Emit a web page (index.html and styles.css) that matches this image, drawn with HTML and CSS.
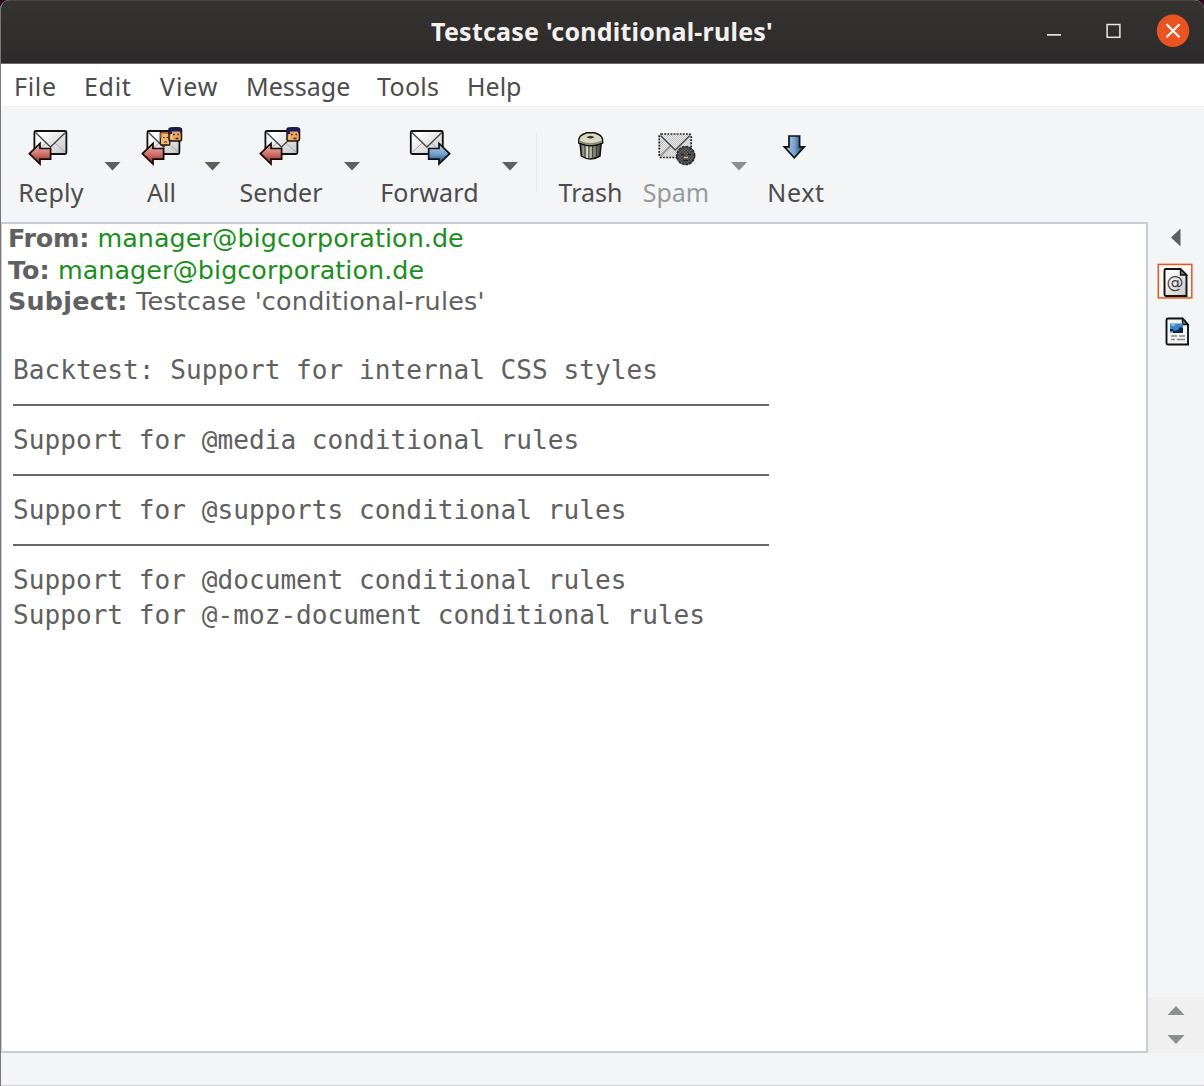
FILE: index.html
```html
<!DOCTYPE html>
<html lang="en">
<head>
<meta charset="utf-8">
<title>Testcase 'conditional-rules'</title>
<link rel="stylesheet" href="styles.css">
</head>
<body>
<svg class="defs" width="0" height="0" aria-hidden="true">
  <defs>
    <linearGradient id="paper" x1="0" y1="0" x2="1" y2="1"><stop offset="0.2" stop-color="#fcfcfc"/><stop offset="1" stop-color="#c4c4c4"/></linearGradient>
    <linearGradient id="red" x1="0" y1="0" x2="0" y2="1"><stop offset="0.2" stop-color="#e5a09a"/><stop offset="0.55" stop-color="#cb6b65"/><stop offset="0.9" stop-color="#8e3329"/></linearGradient>
    <linearGradient id="blue" x1="0" y1="0" x2="0" y2="1"><stop offset="0.2" stop-color="#a3c0dd"/><stop offset="0.55" stop-color="#6e9bc7"/><stop offset="0.8" stop-color="#346092"/></linearGradient>
    <linearGradient id="blue-down" x1="0" y1="0" x2="1" y2="0"><stop offset="0.2" stop-color="#9fbcd8"/><stop offset="0.5" stop-color="#7ca5cc"/><stop offset="0.8" stop-color="#365f8d"/></linearGradient>
    <linearGradient id="can" x1="0" y1="0" x2="1" y2="0"><stop offset="0" stop-color="#55554b"/><stop offset="0.35" stop-color="#dedece"/><stop offset="0.65" stop-color="#8e8e80"/><stop offset="1" stop-color="#35352e"/></linearGradient>
    <pattern id="dither" width="2" height="2" patternUnits="userSpaceOnUse"><rect width="2" height="2" fill="#e9e9e9"/><path d="M0 0h1v1H0zM1 1h1v1H1z" fill="#c3c3c3"/></pattern>
    <pattern id="dither-dark" width="3" height="3" patternUnits="userSpaceOnUse"><rect width="3" height="3" fill="#3b3b3b"/><path d="M0 0h1.3v1.3H0zM1.5 1.5h1.3v1.3H1.5z" fill="#777"/></pattern>
    <g id="envelope">
      <rect x="34.4" y="131" width="32" height="23" rx="1.5" fill="url(#paper)" stroke="#111" stroke-width="1.8"/>
      <path d="M36 152l10-9M65 152l-10-9" stroke="#aaa" fill="none"/>
      <path d="M35.5 132.500l15 14.500 15-14.500" stroke="#444" stroke-width="1.3" fill="none"/>
    </g>
    <path id="arrow-left" d="M29.400 153.700L40 143.500v5h10.600v10.600H40v5z" fill="url(#red)" stroke="#160807" stroke-width="1.7"/>
    <g id="face">
      <rect x="56" y="128" width="12.500" height="13" rx="2" fill="#e9a664" stroke="#17100c" stroke-width="1.5"/>
      <path d="M56 134v-5q6-3.500 12.500-.5v6l-2-3h-7.500v3z" fill="#1d1d57"/>
      <path d="M60 134.500h1.600M64.500 134.500h1.500M62.500 138.500h3" stroke="#4b2413" stroke-width="1.300"/>
      <path d="M58.500 134v5" stroke="#ffd09a"/>
    </g>
  </defs>
</svg>

<div class="window">
  <header class="titlebar">
    <h1 class="title">Testcase 'conditional-rules'</h1>
    <div class="controls">
      <svg width="150" height="40" viewBox="1040 11 150 40">
        <path d="M1047 33.900h14" stroke="#e0e0df" stroke-width="1.800"/>
        <rect x="1107.100" y="23.500" width="12.800" height="12.800" fill="none" stroke="#e8e8e7" stroke-width="1.500"/>
        <circle cx="1173" cy="29.800" r="16.200" fill="#e95420"/>
        <path d="M1166.500 23.300l13 13M1179.500 23.300l-13 13" stroke="#fff" stroke-width="2.100"/>
      </svg>
    </div>
  </header>

  <nav class="menubar">
    <span class="menu menu-file">File</span><span class="menu menu-edit">Edit</span><span class="menu menu-view">View</span><span class="menu menu-message">Message</span><span class="menu menu-tools">Tools</span><span class="menu menu-help">Help</span>
  </nav>

  <div class="toolbar">
    <div class="tool tool-reply"><svg class="icon" viewBox="28 124 46 44"><use href="#envelope"/><use href="#arrow-left"/></svg><span>Reply</span></div>
    <div class="drop drop-reply"><i class="caret"></i></div>
    <div class="tool tool-all"><svg class="icon" viewBox="26 124 46 44"><use href="#envelope"/>
      <rect x="47.300" y="132" width="9.500" height="13" rx="1" fill="#eeb777" stroke="#21150c" stroke-width="1.300"/>
      <path d="M48 133h8M48 133v5" stroke="#b86e22" stroke-width="1.500"/><path d="M50 137.500h1.500M53.500 137.500h1.500M51 142h3" stroke="#58301a" stroke-width="1.200"/>
      <use href="#face"/><use href="#arrow-left"/></svg><span>All</span></div>
    <div class="drop drop-all"><i class="caret"></i></div>
    <div class="tool tool-sender"><svg class="icon" viewBox="27 124 46 44"><use href="#envelope"/><use href="#face"/><use href="#arrow-left"/></svg><span>Sender</span></div>
    <div class="drop drop-sender"><i class="caret"></i></div>
    <div class="tool tool-forward"><svg class="icon" viewBox="407 124 46 44"><use href="#envelope" x="376.400"/><path d="M449.600 153.700L439 143.500v5h-10.300v10.600H439v5z" fill="url(#blue)" stroke="#0a1119" stroke-width="1.700"/></svg><span>Forward</span></div>
    <div class="drop drop-forward"><i class="caret"></i></div>
    <div class="separator"></div>
    <div class="tool tool-trash"><svg class="icon" viewBox="567.500 124 46 44">
      <path d="M579.500 142l1.300 14q9 6 18.700 0l1.300-14z" fill="url(#can)" stroke="#14140f" stroke-width="1.500"/>
      <path d="M584.500 146v11M588.400 146v12.500M592.200 146v12.500M596 146v11" stroke="#45453c" stroke-width="1.300"/>
      <path d="M578.200 141q0-4.500 4-6.500l4-1.700h8l4 1.700q4 2 4 6.500v2q-12 5.500-24 0z" fill="#d9d9c4" stroke="#14140f" stroke-width="1.400"/>
      <path d="M579 141.500q11 5 22.400 0" stroke="#84846f" fill="none" stroke-width="1.500"/>
      <path d="M586 137.300q4-3 8 0-4 2.500-8 0z" fill="#37372e"/>
      </svg><span>Trash</span></div>
    <div class="tool tool-spam"><svg class="icon" viewBox="653 124 46 44">
      <rect x="659.200" y="134" width="32" height="23.500" rx="2" fill="url(#dither)" stroke="#222" stroke-width="1.700" stroke-dasharray="1.800 1.300"/>
      <path d="M660.500 156l10-10" stroke="#999" stroke-width="2"/>
      <path d="M660.500 135.500l14.700 14.500 14.700-14.500" fill="none" stroke="#444" stroke-width="1.300"/>
      <circle cx="685.700" cy="155.600" r="9" fill="url(#dither-dark)" stroke="#252525" stroke-width="1.500" stroke-dasharray="3 .8"/>
      <path d="M681 154.500h3M688 154.500h3M683 160.500h5" stroke="#222" stroke-width="1.500"/><path d="M684 157.500h4" stroke="#d0b56a" stroke-width="1.500"/>
      </svg><span>Spam</span></div>
    <div class="drop drop-spam"><i class="caret caret-dim"></i></div>
    <div class="tool tool-next"><svg class="icon" viewBox="773 124 46 44"><path d="M789 136h10.600v10.800h4.700L794.300 157.800 784.300 146.800h4.700z" fill="url(#blue-down)" stroke="#0a1119" stroke-width="1.700"/></svg><span>Next</span></div>
  </div>

  <div class="workspace">
    <main class="message">
      <div class="headers">
        <div class="header-row"><b class="from">From:</b> <a class="address">manager@bigcorporation.de</a></div>
        <div class="header-row"><b>To:</b> <a class="address">manager@bigcorporation.de</a></div>
        <div class="header-row subject"><b>Subject:</b> Testcase 'conditional-rules'</div>
      </div>
      <div class="body-text">
        <p>Backtest: Support for internal CSS styles</p>
        <hr>
        <p>Support for @media conditional rules</p>
        <hr>
        <p>Support for @supports conditional rules</p>
        <hr>
        <p>Support for @document conditional rules</p>
        <p>Support for @-moz-document conditional rules</p>
      </div>
    </main>
    <aside class="parts">
      <svg width="56" height="130" viewBox="1148 222 56 130">
        <path d="M1171 237.500l9.500-9v18z" fill="#5c6061"/>
        <rect x="1158.300" y="264.400" width="33.500" height="33.500" fill="#fff8f5" stroke="#e95420" stroke-width="1.500"/>
        <path d="M1166 269h14.500l6 6v21H1166q-1.500 0-1.500-1.500v-24q0-1.500 1.500-1.500z" fill="url(#paper)" stroke="#111" stroke-width="1.900"/>
        <path d="M1180.500 269v6h6z" fill="#777" stroke="#111" stroke-width="1.300"/>
        <text x="1175" y="288" text-anchor="middle" class="at-sign">@</text>
        <path d="M1168 318.500h14.500l5.500 6v20h-20q-1.500 0-1.500-1.500v-23q0-1.500 1.500-1.500z" fill="#f4f4f4" stroke="#111" stroke-width="1.900"/>
        <path d="M1182.500 318.500v6h5.500z" fill="#777" stroke="#111" stroke-width="1.300"/>
        <rect x="1170" y="323.500" width="13" height="9" fill="#3d83c8"/>
        <path d="M1170 329l3 0 1 2 4-1 2-3 3 1v5h-10v-2h-3z" fill="#10283e"/><path d="M1171 325h4" stroke="#9cc9f0" stroke-width="1.500"/>
        <path d="M1171 336h6M1179 336h6M1171 339.500h4M1177 339.500h8" stroke="#888" stroke-width="1.300"/>
      </svg>
      <div class="scroll-buttons"><i class="caret caret-up"></i><i class="caret caret-dim"></i></div>
    </aside>
  </div>
  <footer class="statusbar"></footer>
</div>
</body>
</html>
```
FILE: styles.css
```css
* { box-sizing: border-box; }

body {
  margin: 0;
  background: #2c0a20;
  font-family: "Noto Sans", sans-serif;
  font-size: 25px;
  color: #4c4c4c;
}

.defs { display: block; }

.window {
  display: flex;
  flex-direction: column;
  width: 1204px;
  height: 1086px;
  border-left: 1px solid #7c757b;
  border-radius: 9px 9px 0 0;
  background: #f4f5f7;
  overflow: hidden;
}

.titlebar {
  display: grid;
  grid-template-columns: 164px 1fr 164px;
  align-items: center;
  height: 64px;
  margin-left: -1px;
  background: linear-gradient(#353431, #2d2a2b);
  border-top: 1px solid #484744;
  border-bottom: 1px solid #6d6b6b;
}

.title {
  grid-column: 2;
  margin: 0;
  padding-bottom: 3px;
  text-align: center;
  white-space: nowrap;
  font-size: 25px;
  line-height: 34px;
  font-weight: 700;
  letter-spacing: 0.22px;
  color: #f2f1ef;
}

.controls { height: 40px; }
.controls svg { display: block; }

.menubar {
  display: flex;
  align-items: center;
  height: 43px;
  padding: 2px 0 0 13px;
  border-bottom: 1px solid #f0f1f2;
  background: #fff;
  line-height: 34px;
}

.menu-file { width: 70px; letter-spacing: 0.7px; }
.menu-edit { width: 76px; letter-spacing: 0.7px; }
.menu-view { width: 86px; letter-spacing: 0.9px; }
.menu-message { width: 131px; }
.menu-tools { width: 90px; letter-spacing: 0.3px; }

.toolbar {
  display: flex;
  height: 115px;
  padding-top: 17px;
}

.tool {
  display: flex;
  flex-direction: column;
  align-items: center;
  line-height: 34px;
  gap: 7px;
}

.icon { display: block; flex: none; width: 46px; height: 44px; }

.drop {
  display: flex;
  justify-content: center;
  padding-top: 37.500px;
}

.tool-reply { width: 100px; letter-spacing: 0.3px; }
.drop-reply { width: 23px; }
.tool-all { width: 75px; }
.drop-all { width: 27px; }
.tool-sender { width: 110px; }
.drop-sender { width: 32px; }
.tool-forward { width: 123px; letter-spacing: 0.2px; }
.drop-forward { width: 38px; }
.tool-trash { width: 91px; }
.tool-spam { width: 80px; color: #979a9b; }
.drop-spam { width: 46px; }
.tool-next { width: 68px; letter-spacing: 0.6px; }

.separator {
  width: 1px;
  height: 60px;
  margin: 9px 8px 0 7px;
  background: #e8e9eb;
}

.caret {
  display: block;
  width: 17px;
  height: 9px;
  background: #5c6061;
  clip-path: polygon(0 0, 100% 0, 50% 100%);
}

.caret-dim { background: #8b8f8f; }
.caret-up { background: #8b8f8f; clip-path: polygon(50% 0, 100% 100%, 0 100%); }

.workspace {
  display: flex;
  height: 831px;
}

.message {
  width: 1147px;
  border: 2px solid #c9ced4;
  border-left-width: 1px;
  background: #fff;
  color: #606060;
}

.headers {
  margin-top: -1px;
  padding: 0 0 0 6px;
  font-family: "DejaVu Sans", sans-serif;
  font-size: 25.400px;
  line-height: 31.500px;
  letter-spacing: 0.06px;
  white-space: nowrap;
}

.from { letter-spacing: -0.2px; }
.subject { letter-spacing: 0.240px; }

.address { color: #1a8f1a; }

.body-text {
  width: 767px;
  padding: 35px 0 0 11px;
  font-family: "DejaVu Sans Mono", monospace;
  font-size: 26.140px;
  line-height: 35px;
  white-space: nowrap;
}

.body-text p { margin: 0; }

.body-text hr {
  height: 2px;
  margin: 16px 0 17px;
  border: 0;
  background: #666;
}

.parts {
  display: flex;
  flex-direction: column;
  justify-content: space-between;
  width: 56px;
}

.at-sign {
  font-family: "DejaVu Sans", sans-serif;
  font-size: 17px;
  fill: #444;
}

.scroll-buttons {
  display: flex;
  flex-direction: column;
  align-items: center;
  gap: 20px;
  height: 56px;
  padding-top: 9px;
  background: #f0f0f0;
}

.statusbar {
  height: 33px;
  border-bottom: 1px solid #d5d1d5;
}
```
